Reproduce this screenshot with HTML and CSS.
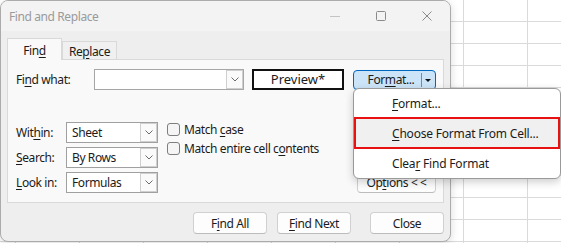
FILE: index.html
```html
<!DOCTYPE html>
<html lang="en">
<head>
    <meta charset="UTF-8">
    <title>Find and Replace</title>
    <link rel="stylesheet" href="styles.css">
</head>
<body>
<div class="desk">
    <div class="dialog">
        <div class="titlebar">
            <span class="title">Find and Replace</span>
            <div class="winbtns">
                <span class="wb"><svg width="10" height="10" viewBox="0 0 10 10"><path d="M0 5.5h10" stroke="#c4c4c4" stroke-width="1"/></svg></span>
                <span class="wb"><svg width="10" height="10" viewBox="0 0 10 10"><rect x="0.5" y="0.5" width="9" height="9" rx="1" fill="none" stroke="#8a8a8a" stroke-width="1"/></svg></span>
                <span class="wb"><svg width="10" height="10" viewBox="0 0 10 10"><path d="M0.5 0.5L9.5 9.5M9.5 0.5L0.5 9.5" stroke="#8a8a8a" stroke-width="1"/></svg></span>
            </div>
        </div>
        <div class="content">
            <div class="tabs">
                <div class="tab active"><span>Fin<u>d</u></span></div>
                <div class="tab"><span>Re<u>p</u>lace</span></div>
            </div>
            <div class="panel">
                <div class="row-find">
                    <span class="lbl-find">Fi<u>n</u>d what:</span>
                    <div class="combo find-combo">
                        <span class="val"></span>
                        <span class="drop"><svg width="8" height="5" viewBox="0 0 8 5"><path d="M0.5 0.5L4 4L7.5 0.5" fill="none" stroke="#6b6b6b" stroke-width="1"/></svg></span>
                    </div>
                    <div class="preview">Preview*</div>
                    <div class="fmt-btn">
                        <span class="fmt-text">For<u>m</u>at...</span>
                        <span class="sep"></span>
                        <span class="tri"></span>
                    </div>
                </div>
                <div class="lower">
                    <div class="opts">
                        <span class="lbl">Wit<u>h</u>in:</span>
                        <div class="combo sel">
                            <span class="val">Sheet</span>
                            <span class="drop"><svg width="8" height="5" viewBox="0 0 8 5"><path d="M0.5 0.5L4 4L7.5 0.5" fill="none" stroke="#6b6b6b" stroke-width="1"/></svg></span>
                        </div>
                        <span class="lbl"><u>S</u>earch:</span>
                        <div class="combo sel">
                            <span class="val">By Rows</span>
                            <span class="drop"><svg width="8" height="5" viewBox="0 0 8 5"><path d="M0.5 0.5L4 4L7.5 0.5" fill="none" stroke="#6b6b6b" stroke-width="1"/></svg></span>
                        </div>
                        <span class="lbl"><u>L</u>ook in:</span>
                        <div class="combo sel">
                            <span class="val">Formulas</span>
                            <span class="drop"><svg width="8" height="5" viewBox="0 0 8 5"><path d="M0.5 0.5L4 4L7.5 0.5" fill="none" stroke="#6b6b6b" stroke-width="1"/></svg></span>
                        </div>
                    </div>
                    <div class="checks">
                        <div class="check"><span class="box"></span><span>Match <u>c</u>ase</span></div>
                        <div class="check"><span class="box"></span><span>Match entire cell c<u>o</u>ntents</span></div>
                    </div>
                    <div class="btn options-btn"><span>Op<u>t</u>ions &lt; &lt;</span></div>
                </div>
            </div>
            <div class="actions">
                <div class="btn act first"><span>F<u>i</u>nd All</span></div>
                <div class="btn act"><span><u>F</u>ind Next</span></div>
                <div class="btn act close"><span>Close</span></div>
            </div>
        </div>
    </div>

    <div class="menu">
        <div class="item"><span><u>F</u>ormat...</span></div>
        <div class="item picked"><span><u>C</u>hoose Format From Cell...</span></div>
        <div class="item"><span>Clea<u>r</u> Find Format</span></div>
    </div>
</div>
</body>
</html>
```

FILE: styles.css
```css
* {
    box-sizing: border-box;
}
body {
    margin: 0;
    width: 561px;
    height: 243px;
    overflow: hidden;
    font-family: "Noto Sans", "Open Sans", sans-serif;
    font-size: 12px;
    letter-spacing: -0.4px;
    color: #1b1b1b;
    background-color: #fff;
    background-image:
        linear-gradient(to right, #dadada 1px, transparent 1px),
        linear-gradient(to bottom, #dadada 1px, transparent 1px);
    background-size: 64px 22px;
    background-position: 15px 21px;
}
u {
    text-underline-offset: 2px;
}
.desk {
    position: relative;
    width: 561px;
    height: 243px;
}
.dialog {
    width: 451px;
    height: 242px;
    border: 1px solid #ababab;
    border-radius: 8px;
    background: #eeeeee;
    box-shadow: 0 2px 8px rgba(0, 0, 0, 0.15);
    overflow: hidden;
    display: flex;
    flex-direction: column;
}
.titlebar {
    height: 30px;
    flex: none;
    background: #f3f3f3;
    display: flex;
    align-items: center;
    padding-left: 8px;
    color: #9a9a9a;
}
.winbtns {
    margin-left: auto;
    display: flex;
}
.wb {
    width: 46px;
    height: 30px;
    display: flex;
    align-items: center;
    justify-content: center;
}
.content {
    padding: 7px 6px 0 6px;
}
.tabs {
    display: flex;
    align-items: flex-end;
    height: 21px;
    position: relative;
    z-index: 1;
}
.tab {
    width: 55px;
    height: 18px;
    border: 1px solid #d9d9d9;
    border-bottom: none;
    background: #f0f0f0;
    display: flex;
    align-items: center;
    justify-content: center;
    padding-top: 1px;
}
.tab.active {
    height: 22px;
    margin-bottom: -1px;
    background: #f9f9f9;
    padding-top: 2px;
}
.panel {
    width: 437px;
    height: 144px;
    border: 1px solid #d9d9d9;
    background: #f9f9f9;
    padding: 9px 7px 8px 8px;
}
.row-find {
    display: flex;
    align-items: center;
    height: 21px;
}
.lbl-find {
    width: 78px;
}
.combo {
    display: flex;
    align-items: stretch;
    background: #fff;
    border: 1px solid #a6a6a6;
    height: 21px;
}
.combo .val {
    flex: 1;
    padding-left: 5px;
    display: flex;
    align-items: center;
}
.combo .drop {
    width: 17px;
    border: 1px solid #cfcfcf;
    background: #fafafa;
    display: flex;
    align-items: center;
    justify-content: center;
}
.find-combo {
    width: 150px;
}
.preview {
    width: 92px;
    height: 21px;
    margin-left: 8px;
    margin-top: -1px;
    border: 2px solid #111;
    background: #fff;
    font-size: 13px;
    letter-spacing: 0;
    display: flex;
    align-items: center;
    justify-content: center;
}
.fmt-btn {
    width: 83px;
    height: 20px;
    margin-left: 9px;
    border: 1px solid #0067c0;
    border-radius: 4px;
    background: #cce4f7;
    display: flex;
    align-items: center;
}
.fmt-text {
    flex: 1;
    text-align: center;
    padding-left: 7px;
}
.sep {
    width: 1px;
    height: 14px;
    background: #7a8a99;
}
.tri {
    width: 0;
    height: 0;
    margin: 1px 4px 0 3px;
    border-left: 3px solid transparent;
    border-right: 3px solid transparent;
    border-top: 3px solid #111;
}
.lower {
    display: flex;
    align-items: flex-end;
    margin-top: 32px;
}
.opts {
    display: grid;
    grid-template-columns: 50px 92px;
    grid-auto-rows: 21px;
    row-gap: 4px;
    align-items: center;
}
.sel {
    border-color: #a0a0a0;
}
.checks {
    align-self: flex-start;
    margin-left: 9px;
    padding-top: 1px;
}
.check {
    height: 19px;
    display: flex;
    align-items: flex-start;
    line-height: 13px;
}
.check .box {
    width: 13px;
    height: 13px;
    border: 1px solid #7e7e7e;
    border-radius: 3px;
    background: #f5f5f5;
    margin-right: 4px;
}
.btn {
    background: #fdfdfd;
    border: 1px solid #d0d0d0;
    border-bottom-color: #bcbcbc;
    border-radius: 4px;
    display: flex;
    align-items: center;
    justify-content: center;
}
.options-btn {
    margin-left: auto;
    width: 79px;
    height: 22px;
}
.actions {
    display: flex;
    margin-top: 9px;
}
.act {
    width: 75px;
    height: 22px;
    margin-left: 10px;
}
.act.first {
    margin-left: 186px;
}
.act.close {
    margin-left: 19px;
}
.menu {
    position: absolute;
    left: 353px;
    top: 88px;
    width: 208px;
    height: 91px;
    background: #fff;
    border: 1px solid #9a9a9a;
    border-radius: 6px;
    box-shadow: 0 3px 8px rgba(0, 0, 0, 0.2);
    overflow: hidden;
    font-size: 12px;
    letter-spacing: -0.2px;
}
.item {
    height: 28px;
    padding-left: 38px;
    display: flex;
    align-items: center;
}
.item.picked {
    height: 32px;
    padding-left: 36px;
    border: 2px solid #e81010;
    background: #f0f0f0;
}
```
